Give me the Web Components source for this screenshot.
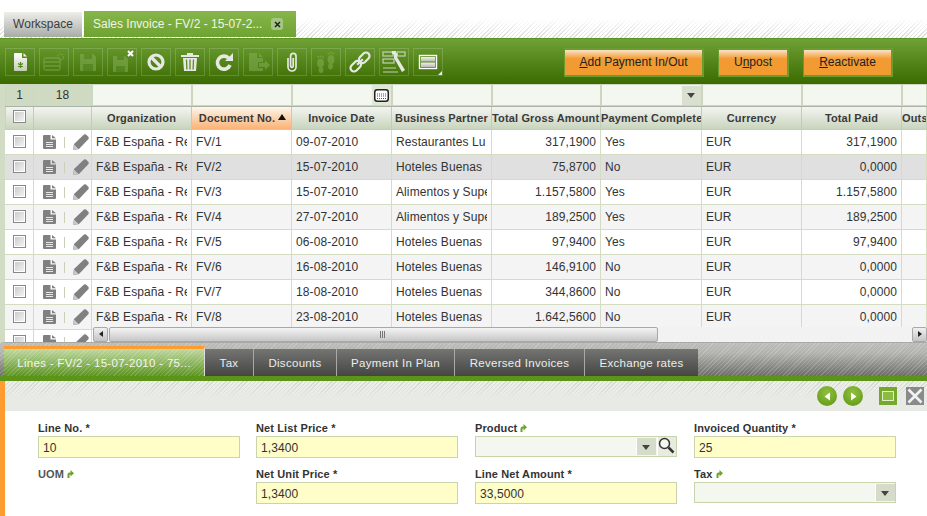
<!DOCTYPE html>
<html>
<head>
<meta charset="utf-8">
<title>Sales Invoice</title>
<style>
html, body { margin: 0; padding: 0; background: #fff; overflow: hidden; }
body { width: 927px; height: 516px; font-family: "Liberation Sans", Arial, sans-serif; font-size: 12px; color: #333; }
</style>
</head>
<body>
<ob-main-tabs></ob-main-tabs>
<ob-toolbar></ob-toolbar>
<ob-grid></ob-grid>
<ob-sub-tabs></ob-sub-tabs>
<ob-status-bar></ob-status-bar>
<ob-form></ob-form>

<script>
const HATCH = 'repeating-linear-gradient(135deg, rgba(255,255,255,.16) 0 1px, transparent 1px 3px)';

const ICONS = {
    newdoc: `<defs><linearGradient id="nd" x1="0" y1="0" x2="0" y2="1"><stop offset="0" stop-color="#fff"/><stop offset="1" stop-color="#c4ccb8"/></linearGradient></defs>
        <path d="M7 3h7v5h5v12q0 1-1 1H7q-1 0-1-1V4q0-1 1-1z M15.500 3L19 6.500h-3.500z" fill="url(#nd)"/>
        <path d="M12.500 12v6M10 13.500l5 3M15 13.500l-5 3" stroke="#4d8a10" stroke-width="1.200"/>`,
    grid: `<g fill="none" stroke="#8ab35c" stroke-width="1.300"><rect x="2" y="8" width="16" height="12" rx="1.500"/><path d="M2 12h16M2 16h16"/><circle cx="18.500" cy="7" r="3" stroke-dasharray="1.500 1"/></g>`,
    save: `<path d="M4 4h13l3 3v13q0 1-1 1H5q-1 0-1-1z" fill="#8ab35c"/><rect x="8" y="4" width="8" height="5" fill="#5f8f2c"/><rect x="7" y="14" width="10" height="7" fill="#5f8f2c"/>`,
    saveclose: `<path d="M3 6h12l3 3v12q0 1-1 1H4q-1 0-1-1z" fill="#8ab35c"/><rect x="7" y="6" width="7" height="4" fill="#5f8f2c"/><rect x="6" y="16" width="9" height="6" fill="#5f8f2c"/>`,
    cancel: `<circle cx="12" cy="12" r="7" fill="none" stroke="#e6e9e2" stroke-width="3.200"/><path d="M7 7l10 10" stroke="#e6e9e2" stroke-width="3.200"/>`,
    trash: `<path d="M3 5h18v2H3z M9 3h6v2H9z" fill="#e6e9e2"/><path d="M5 8h14l-1 13H6z" fill="#e6e9e2"/><path d="M8.500 9.500l.4 10M12 9.500v10M15.500 9.500l-.4 10" stroke="#5c8a28" stroke-width="1.300"/>`,
    refresh: `<path d="M18 15A6.500 6.500 0 1 1 16.500 8" fill="none" stroke="#e6e9e2" stroke-width="3.600"/><path d="M13 11h8V3z" fill="#e6e9e2"/>`,
    exportdoc: `<path d="M3 3h8v5h6v4h-5v6h5v3H3z M13 3l4 4h-4z" fill="#8ab35c"/><path d="M13 13h6v-3l5 5-5 5v-3h-6z" fill="#8ab35c"/>`,
    clip: `<path d="M8 8v9a4 4 0 0 0 8 0V6a2.700 2.700 0 0 0-5.400 0v10a1.300 1.300 0 0 0 2.600 0V8" fill="none" stroke="#e6e9e2" stroke-width="1.700"/>`,
    feet: `<g fill="#8ab35c"><ellipse cx="6.500" cy="13" rx="3.400" ry="4.500"/><ellipse cx="7" cy="20" rx="2.400" ry="3"/><ellipse cx="17" cy="9.500" rx="3.400" ry="4.500"/><ellipse cx="16.500" cy="16.500" rx="2.400" ry="3"/><circle cx="4" cy="7" r="1"/><circle cx="6.500" cy="6.500" r="1"/><circle cx="9" cy="7" r="1"/><circle cx="14.500" cy="3.500" r="1"/><circle cx="17" cy="3" r="1"/><circle cx="19.500" cy="3.500" r="1"/></g>`,
    link: `<g fill="none" stroke="#e6e9e2" stroke-width="2.200" transform="rotate(-45 12 12)"><rect x="0" y="8.500" width="12" height="7" rx="3.500"/><rect x="12" y="8.500" width="12" height="7" rx="3.500"/><path d="M8 12h8"/></g>`,
    tools: `<g fill="none" stroke="#c4d0b4" stroke-width="1.200"><rect x="1" y="2" width="10" height="4"/><rect x="15" y="2" width="8" height="4"/><rect x="1" y="9" width="11" height="4"/><path d="M1 18h13M1 22h15"/></g>
        <path d="M9 2l3 3v3l8 14 3-2-8-13 1-3-3-2z" fill="#e6e9e2"/><path d="M10 1h4v3h-4z" fill="#e6e9e2"/>`,
    view: `<rect x="3.500" y="5.500" width="17" height="13" fill="none" stroke="#fff" stroke-width="1.400"/><defs><linearGradient id="vw" x1="0" y1="0" x2="0" y2="1"><stop offset="0" stop-color="#eef0ea"/><stop offset="1" stop-color="#b8bcb2"/></linearGradient></defs><rect x="5" y="7" width="14" height="4.500" fill="url(#vw)"/><rect x="5" y="12.500" width="14" height="4.500" fill="url(#vw)"/>`
};

class ObMainTabs extends HTMLElement {
    constructor() {
        super();
        this.attachShadow({ mode: 'open' });
        this.shadowRoot.innerHTML = `
            <style>
                :host {
                    display: flex;
                    height: 38px;
                    box-sizing: border-box;
                    padding: 11px 0 1px 4px;
                    background: linear-gradient(#fff 18px, rgba(255,255,255,.55) 30px, rgba(255,255,255,.2)), repeating-linear-gradient(135deg, #cfcfcf 0 1px, #fff 1px 3px);
                }
                .tab {
                    height: 26px;
                    line-height: 26px;
                    box-sizing: border-box;
                    font-size: 12px;
                    white-space: nowrap;
                }
                .work {
                    width: 79px;
                    text-align: center;
                    color: #3c3c3c;
                    background: linear-gradient(#eeeeea, #a9aca6);
                    border-top: 1px solid #fff;
                    border-right: 1px solid #fff;
                    line-height: 25px;
                    margin-right: 1px;
                }
                .active {
                    width: 212px;
                    padding-left: 9px;
                    color: #eff5e6;
                    background: linear-gradient(#87b54a, #6ea332);
                    display: flex;
                    align-items: center;
                    gap: 9px;
                    overflow: hidden;
                }
                .close {
                    width: 12px;
                    height: 12px;
                    border-radius: 3px;
                    background: #a5c785;
                    display: flex;
                    align-items: center;
                    justify-content: center;
                }
            </style>
            <div class="tab work">Workspace</div>
            <div class="tab active">
                <span>Sales Invoice - FV/2 - 15-07-2...</span>
                <span class="close"><svg width="7" height="7" viewBox="0 0 7 7"><path d="M1 1l5 5M6 1L1 6" stroke="#222" stroke-width="1.500"/></svg></span>
            </div>
        `;
    }
}

class ObToolButton extends HTMLElement {
    constructor() {
        super();
        this.attachShadow({ mode: 'open' });
    }

    connectedCallback() {
        const icon = this.getAttribute('icon');
        const badge = icon === 'saveclose'
            ? '<svg class="badge" width="7" height="7" viewBox="0 0 7 7"><path d="M1 1l5 5M6 1L1 6" stroke="#fff" stroke-width="2"/></svg>'
            : '';
        this.shadowRoot.innerHTML = `
            <style>
                :host {
                    display: flex;
                    align-items: center;
                    justify-content: center;
                    position: relative;
                    width: 30px;
                    height: 28px;
                    box-sizing: border-box;
                    border: 1px solid rgba(255,255,255,.17);
                }
                :host([disabled]) svg.main { opacity: .5; }
                .corner {
                    position: absolute;
                    right: 0;
                    bottom: 0;
                    border-style: solid;
                    border-width: 0 0 4px 4px;
                    border-color: transparent transparent #e8ebe2 transparent;
                }
                .badge { position: absolute; right: 2px; top: 1px; }
            </style>
            <svg class="main" width="24" height="24" viewBox="0 0 24 24">${ICONS[icon]}</svg>
            ${badge}
            ${this.hasAttribute('corner') ? '<span class="corner"></span>' : ''}
        `;
    }
}

class ObActionButton extends HTMLElement {
    constructor() {
        super();
        this.attachShadow({ mode: 'open' });
        this.shadowRoot.innerHTML = `
            <style>
                :host {
                    display: block;
                    box-sizing: border-box;
                    height: 29px;
                    line-height: 25px;
                    border: 2px solid #6a9c32;
                    border-left-width: 1px;
                    text-align: center;
                    font-size: 12px;
                    color: #222;
                    background: linear-gradient(#fbe3c8, #f29b33 35%, #f09a30);
                }
            </style>
            <slot></slot>
        `;
    }
}

class ObToolbar extends HTMLElement {
    constructor() {
        super();
        this.attachShadow({ mode: 'open' });
        this.shadowRoot.innerHTML = `
            <style>
                :host {
                    display: flex;
                    align-items: flex-start;
                    height: 46px;
                    box-sizing: border-box;
                    padding: 9px 0 0 5px;
                    background: linear-gradient(#6fa135, #3a6a00);
                    border-top: 1px solid #5e9424;
                }
                .tools { display: flex; gap: 4px; }
                .actions { display: flex; gap: 14px; margin-left: 121px; }
                .add { width: 140px; }
                .unpost { width: 71px; }
                .react { width: 90px; }
            </style>
            <div class="tools">
                <ob-tool-button icon="newdoc"></ob-tool-button>
                <ob-tool-button icon="grid" disabled></ob-tool-button>
                <ob-tool-button icon="save" disabled></ob-tool-button>
                <ob-tool-button icon="saveclose" disabled></ob-tool-button>
                <ob-tool-button icon="cancel"></ob-tool-button>
                <ob-tool-button icon="trash"></ob-tool-button>
                <ob-tool-button icon="refresh"></ob-tool-button>
                <ob-tool-button icon="exportdoc" disabled></ob-tool-button>
                <ob-tool-button icon="clip"></ob-tool-button>
                <ob-tool-button icon="feet" disabled></ob-tool-button>
                <ob-tool-button icon="link"></ob-tool-button>
                <ob-tool-button icon="tools"></ob-tool-button>
                <ob-tool-button icon="view" corner></ob-tool-button>
            </div>
            <div class="actions">
                <ob-action-button class="add"><u>A</u>dd Payment In/Out</ob-action-button>
                <ob-action-button class="unpost">U<u>n</u>post</ob-action-button>
                <ob-action-button class="react"><u>R</u>eactivate</ob-action-button>
            </div>
        `;
    }
}

const COLS = [28, 58, 100, 100, 100, 100, 109, 101, 100, 100, 25];
const HEADERS = ['', '', 'Organization', 'Document No.', 'Invoice Date', 'Business Partner', 'Total Gross Amount', 'Payment Complete', 'Currency', 'Total Paid', 'Outs'];
// only what the narrow columns leave visible
const ORG = 'F&amp;B España - Re';
const ROWS = [
    ['FV/1', '09-07-2010', 'Restaurantes Lu', '317,1900', 'Yes', '317,1900'],
    ['FV/2', '15-07-2010', 'Hoteles Buenas', '75,8700', 'No', '0,0000'],
    ['FV/3', '15-07-2010', 'Alimentos y Supe', '1.157,5800', 'Yes', '1.157,5800'],
    ['FV/4', '27-07-2010', 'Alimentos y Supe', '189,2500', 'Yes', '189,2500'],
    ['FV/5', '06-08-2010', 'Hoteles Buenas', '97,9400', 'Yes', '97,9400'],
    ['FV/6', '16-08-2010', 'Hoteles Buenas', '146,9100', 'No', '0,0000'],
    ['FV/7', '18-08-2010', 'Hoteles Buenas', '344,8600', 'No', '0,0000'],
    ['FV/8', '23-08-2010', 'Hoteles Buenas', '1.642,5600', 'No', '0,0000'],
    ['', '', '', '', '', '']
];
const DOC_ICON = `<svg width="13" height="14" viewBox="0 0 13 14"><path d="M1 0h6.500v4.500H13V13q0 1-1 1H1q-1 0-1-1V1q0-1 1-1z M9 0l4 3.200H9z" fill="#808080"/><path d="M3 7.500h7M3 9.500h7M3 11.500h7" stroke="#e8e8e8" stroke-width="1"/></svg>`;
const PEN_ICON = `<svg width="17" height="16" viewBox="0 0 17 16"><path d="M12 0.500q1-.5 2 0l2.500 2.500q.5 1 0 2L7 15 1 16l1-6z" fill="#808080"/><path d="M1 16l1-5.500L6.500 15z" fill="#c8c8c8"/></svg>`;
const CAL_ICON = `<svg width="15" height="13" viewBox="0 0 15 13"><rect x=".75" y=".75" width="13.500" height="11.500" rx="2.500" fill="#fff" stroke="#222" stroke-width="1.500"/><path d="M3 5h9M3 7h9M3 9.500h9" stroke="#555" stroke-width="1" stroke-dasharray="1 1"/></svg>`;

class ObGrid extends HTMLElement {
    constructor() {
        super();
        this.attachShadow({ mode: 'open' });
        const tracks = COLS.map(w => w + 'px').join(' ');
        const filters = COLS.map((_, i) => {
            if (i === 0) return '<div class="f count">1</div>';
            if (i === 1) return '<div class="f count">18</div>';
            if (i === 4) return `<div class="f"><span class="cal">${CAL_ICON}</span></div>`;
            if (i === 7) return '<div class="f"><span class="drop"></span></div>';
            return '<div class="f"></div>';
        }).join('');
        const heads = HEADERS.map((h, i) => {
            if (i === 0) return '<div class="h"><span class="check"></span></div>';
            if (i === 3) return `<div class="h sorted">${h}<span class="arrow"></span></div>`;
            return `<div class="h">${h}</div>`;
        }).join('');
        const cell = (text, cls) => `<div class="c ${cls || ''}"><span>${text}</span></div>`;
        const rows = ROWS.map((r, n) => {
            const bg = n === 1 ? 'sel' : (n > 1 && n % 2 === 1 ? 'alt' : '');
            return `<div class="row data ${bg}">
                <div class="c ctr"><span class="check"></span></div>
                <div class="c ops">${DOC_ICON}<i></i>${PEN_ICON}</div>
                ${cell(r[0] ? ORG : '')}
                ${cell(r[0])}
                ${cell(r[1])}
                ${cell(r[2])}
                ${cell(r[3], 'num')}
                ${cell(r[4])}
                ${cell(r[0] ? 'EUR' : '')}
                ${cell(r[5], 'num')}
                <div class="c"></div>
            </div>`;
        }).join('');
        this.shadowRoot.innerHTML = `
            <style>
                :host {
                    display: block;
                    position: relative;
                    height: 259px;
                    box-sizing: border-box;
                    overflow: hidden;
                    background: #fff;
                    border-left: 5px solid #d2dcc4;
                    border-bottom: 1px solid #a9a9a9;
                    font-size: 12px;
                    color: #333;
                }
                .row {
                    display: grid;
                    grid-template-columns: ${tracks};
                    width: 922px;
                    padding-left: 1px;
                    box-sizing: border-box;
                }
                .filter { height: 23px; background: #ccd7c0; padding-top: 1px; border-bottom: 1px solid #aab4a6; box-sizing: border-box; }
                .f {
                    box-sizing: border-box;
                    height: 20px;
                    margin: 0 1px 0 1px;
                    background: #f4f7ef;
                    position: relative;
                }
                .f.count { margin: 0 1px 0 0; background: #cfdac3; text-align: center; line-height: 21px; color: #333; height: 21px; }
                .cal {
                    position: absolute;
                    right: 0;
                    top: 0;
                    width: 19px;
                    height: 20px;
                    background: #e2e8d8;
                    display: flex;
                    align-items: center;
                    justify-content: center;
                }
                .drop {
                    position: absolute;
                    right: 0;
                    top: 1px;
                    width: 19px;
                    height: 19px;
                    background: #d9e0cf;
                }
                .drop::after {
                    content: '';
                    position: absolute;
                    left: 5px;
                    top: 7px;
                    border-style: solid;
                    border-width: 5px 4.500px 0;
                    border-color: #444 transparent transparent;
                }
                .head { height: 23px; background: #c9d5bb; border-bottom: 1px solid #c4ceb6; box-sizing: border-box; }
                .h {
                    height: 22px;
                    line-height: 22px;
                    box-sizing: border-box;
                    border-right: 1px solid #c2ccb6;
                    background: linear-gradient(#f3f4f1, #c9d5bd);
                    font-weight: bold;
                    font-size: 11px;
                    letter-spacing: .15px;
                    color: #3a3a3a;
                    text-align: center;
                    white-space: nowrap;
                    overflow: hidden;
                    position: relative;
                }
                .h:nth-child(7), .h:nth-child(8), .h:nth-child(11) { text-align: left; }
                .h .check { margin-top: 3px; }
                .sorted { background: linear-gradient(#fdf6ec, #fbb274); padding-left: 2px; }
                .arrow {
                    display: inline-block;
                    margin-left: 3px;
                    vertical-align: 2px;
                    border-style: solid;
                    border-width: 0 4px 6px;
                    border-color: transparent transparent #111;
                }
                .check {
                    display: block;
                    width: 11px;
                    height: 11px;
                    margin: 5px auto 0;
                    border: 1px solid #888;
                    background: linear-gradient(135deg, #c8c8c8, #f6f6f6);
                    box-shadow: inset 0 0 0 1px #fff;
                }
                .data { height: 25px; border-bottom: 1px solid #d4dcc2; box-sizing: border-box; }
                .alt { background: #f4f4f4; }
                .sel { background: #e0e0e0; }
                .c {
                    height: 24px;
                    line-height: 24px;
                    box-sizing: border-box;
                    padding: 0 4px;
                    border-right: 1px solid #d4dcc2;
                    letter-spacing: .1px;
                }
                .c span { display: block; overflow: hidden; white-space: nowrap; }
                .c.ctr { padding: 0; }
                .c.ctr .check { margin-top: 5px; }
                .c.num { text-align: right; }
                .c.ops { display: flex; align-items: center; padding: 0 0 0 9px; overflow: hidden; }
                .ops i { width: 1px; height: 11px; background: #c8d0b8; margin: 0 7px 0 8px; }
                .scroll {
                    position: absolute;
                    left: 88px;
                    right: 0;
                    bottom: 0;
                    height: 15px;
                    background: #f2f2f2;
                    display: flex;
                }
                .sbtn {
                    width: 15px;
                    box-sizing: border-box;
                    border: 1px solid #a8a8a8;
                    border-radius: 2px;
                    background: linear-gradient(#f0f0f0, #c4c4c4);
                    position: relative;
                }
                .sbtn::after {
                    content: '';
                    position: absolute;
                    top: 3px;
                    left: 5px;
                    border-style: solid;
                    border-width: 3.500px 4px 3.500px 0;
                    border-color: transparent #222 transparent transparent;
                }
                .sbtn.r { margin-left: auto; }
                .sbtn.r::after { border-width: 3.500px 0 3.500px 4px; border-color: transparent transparent transparent #222; }
                .thumb {
                    width: 549px;
                    margin-left: 1px;
                    box-sizing: border-box;
                    border: 1px solid #a8a8a8;
                    border-radius: 2px;
                    background: linear-gradient(#f4f4f4, #c6c6c6);
                    position: relative;
                }
                .thumb::after {
                    content: '';
                    position: absolute;
                    left: 270px;
                    top: 3px;
                    width: 6px;
                    height: 7px;
                    background: repeating-linear-gradient(90deg, #777 0 1px, transparent 1px 2px);
                }
            </style>
            <div class="row filter">${filters}</div>
            <div class="row head">${heads}</div>
            ${rows}
            <div class="scroll">
                <div class="sbtn"></div>
                <div class="thumb"></div>
                <div class="sbtn r"></div>
            </div>
        `;
    }
}

class ObSubTabs extends HTMLElement {
    constructor() {
        super();
        this.attachShadow({ mode: 'open' });
        const tabs = [['Tax', 49], ['Discounts', 83], ['Payment In Plan', 118], ['Reversed Invoices', 130], ['Exchange rates', 113]];
        this.shadowRoot.innerHTML = `
            <style>
                :host {
                    display: flex;
                    align-items: flex-end;
                    height: 38px;
                    box-sizing: border-box;
                    padding: 3px 0 0 4px;
                    border-bottom: 5px solid #5b9416;
                    background: ${HATCH}, linear-gradient(#bcbcb8 0, #b2b2ae 30%, #6c6c6a);
                    font-size: 11.500px;
                    color: #eceeea;
                    letter-spacing: .3px;
                }
                .tab {
                    box-sizing: border-box;
                    height: 27px;
                    line-height: 28px;
                    text-align: center;
                    white-space: nowrap;
                    border-right: 1px solid #a8a8a8;
                    background: linear-gradient(#747472, #454543);
                }
                .tab:last-child { border-right: 0; }
                .active {
                    width: 201px;
                    height: 30px;
                    line-height: 28px;
                    box-sizing: border-box;
                    border-top: 3px solid #ff9c2f;
                    border-right: 1px solid #ddd;
                    text-align: center;
                    background: ${HATCH}, linear-gradient(#bfd89f, #5c9420);
                    color: #f2f6ea;
                    white-space: nowrap;
                }
            </style>
            <div class="active">Lines - FV/2 - 15-07-2010 - 75...</div>
            ${tabs.map(t => `<div class="tab" style="width:${t[1]}px">${t[0]}</div>`).join('')}
        `;
    }
}

class ObStatusBar extends HTMLElement {
    constructor() {
        super();
        this.attachShadow({ mode: 'open' });
        this.shadowRoot.innerHTML = `
            <style>
                :host {
                    display: flex;
                    align-items: center;
                    height: 30px;
                    box-sizing: border-box;
                    padding: 0 3px 0 0;
                    justify-content: flex-end;
                    background: linear-gradient(rgba(232,234,230,0), #e8eae6 60%), repeating-linear-gradient(135deg, #d4d6d0 0 1px, #eef0ec 1px 3px);
                    background-color: #e8eae6;
                    border-left: 5px solid #ff9c2f;
                }
                .round {
                    width: 20px;
                    height: 20px;
                    border-radius: 50%;
                    margin-right: 6px;
                    background: radial-gradient(circle at 50% 35%, #8fc13f, #5d9412);
                    display: flex;
                    align-items: center;
                    justify-content: center;
                }
                .sq {
                    width: 18px;
                    height: 18px;
                    box-sizing: border-box;
                    display: flex;
                    align-items: center;
                    justify-content: center;
                }
                .max { background: #76a82c; margin: 0 9px 0 10px; }
                .max span { width: 10px; height: 8px; border: 1px solid #e2eec8; background: #8cbb44; }
                .cls { background: #8a8a8a; }
            </style>
            <span class="round"><svg width="9" height="9" viewBox="0 0 9 9"><path d="M7 0.500V8.500L1.500 4.500z" fill="#fff"/></svg></span>
            <span class="round"><svg width="9" height="9" viewBox="0 0 9 9"><path d="M2 0.500V8.500L7.500 4.500z" fill="#fff"/></svg></span>
            <span class="sq max"><span></span></span>
            <span class="sq cls"><svg width="16" height="16" viewBox="0 0 16 16"><path d="M1.500 1.500l13 13M14.500 1.500l-13 13" stroke="#f2f2f2" stroke-width="2.600"/></svg></span>
        `;
    }
}

class ObField extends HTMLElement {
    constructor() {
        super();
        this.attachShadow({ mode: 'open' });
    }

    connectedCallback() {
        const label = this.getAttribute('label') || '';
        const value = this.getAttribute('value') || '';
        const type = this.getAttribute('type') || 'text';
        const link = this.hasAttribute('link')
            ? '<svg class="lnk" width="7" height="8" viewBox="0 0 7 8"><path d="M.5 8V4.500Q.5 2.500 2.500 2.500H3.500V0L7 3.200 3.500 6.500V4.500H3Q2.500 4.500 2.500 5V8z" fill="#6ea32c"/></svg>'
            : '';
        let box = `<div class="box req">${value}</div>`;
        if (type === 'select' || type === 'search') {
            box = `<div class="combo"><div class="box opt"></div><span class="drop"></span>${type === 'search'
                ? '<span class="find"><svg width="17" height="17" viewBox="0 0 17 17"><circle cx="6.500" cy="6.500" r="5" fill="#f4f6f0" stroke="#333" stroke-width="1.500"/><path d="M10.500 10.500l5 5" stroke="#333" stroke-width="2.500"/></svg></span>' : ''}</div>`;
        }
        if (type === 'label') box = '';
        this.shadowRoot.innerHTML = `
            <style>
                :host { display: block; width: 202px; height: 46px; box-sizing: border-box; }
                label {
                    display: block;
                    height: 15px;
                    line-height: 14px;
                    font-size: 11px;
                    font-weight: bold;
                    letter-spacing: .12px;
                    color: #333;
                }
                :host([type="label"]) label { color: #555; }
                .lnk { margin-left: 3px; }
                .box {
                    box-sizing: border-box;
                    height: 22px;
                    line-height: 22px;
                    padding: 0 4px;
                    font-size: 12px;
                    letter-spacing: .1px;
                    color: #333;
                    border: 1px solid #c8d4ac;
                }
                .req { background: #fffdc8; }
                .combo { display: flex; height: 21px; border: 1px solid #c8d4ac; background: #f4f6f0; box-sizing: border-box; }
                .opt { flex: 1; border: 0; background: #f4f6f0; height: 19px; }
                .drop {
                    width: 19px;
                    height: 17px;
                    margin-top: 1px;
                    margin-left: 1px;
                    background: #d6dcca;
                    border-left: 1px solid #fff;
                    position: relative;
                }
                .drop::after {
                    content: '';
                    position: absolute;
                    left: 5px;
                    top: 7px;
                    border-style: solid;
                    border-width: 5px 4.500px 0;
                    border-color: #444 transparent transparent;
                }
                .find { width: 18px; height: 19px; margin-left: 1px; background: #e8ece0; border-left: 1px solid #fff; }
            </style>
            <label>${label}${link}</label>
            ${box}
        `;
    }
}

class ObForm extends HTMLElement {
    constructor() {
        super();
        this.attachShadow({ mode: 'open' });
        this.shadowRoot.innerHTML = `
            <style>
                :host {
                    display: grid;
                    grid-template-columns: 218px 219px 219px 202px;
                    align-content: start;
                    height: 105px;
                    box-sizing: border-box;
                    padding: 10px 0 0 33px;
                    background: #fff;
                    border-left: 5px solid #ff9c2f;
                }
            </style>
            <ob-field label="Line No. *" value="10"></ob-field>
            <ob-field label="Net List Price *" value="1,3400"></ob-field>
            <ob-field label="Product" link type="search"></ob-field>
            <ob-field label="Invoiced Quantity *" value="25"></ob-field>
            <ob-field label="UOM" link type="label"></ob-field>
            <ob-field label="Net Unit Price *" value="1,3400"></ob-field>
            <ob-field label="Line Net Amount *" value="33,5000"></ob-field>
            <ob-field label="Tax" link type="select"></ob-field>
        `;
    }
}

customElements.define('ob-main-tabs', ObMainTabs);
customElements.define('ob-tool-button', ObToolButton);
customElements.define('ob-action-button', ObActionButton);
customElements.define('ob-toolbar', ObToolbar);
customElements.define('ob-grid', ObGrid);
customElements.define('ob-sub-tabs', ObSubTabs);
customElements.define('ob-status-bar', ObStatusBar);
customElements.define('ob-field', ObField);
customElements.define('ob-form', ObForm);
</script>
</body>
</html>
